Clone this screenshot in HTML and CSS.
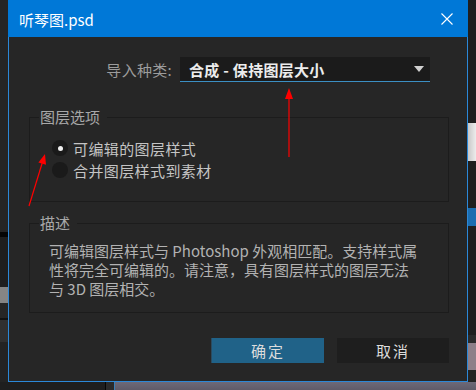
FILE: index.html
```html
<!DOCTYPE html>
<html lang="zh-CN">
<head>
    <meta charset="UTF-8">
    <meta name="viewport" content="width=device-width, initial-scale=1.0">
    <title>听琴图.psd</title>
    <link rel="stylesheet" href="styles.css">
</head>
<body>
    <div class="desktop">
        <div class="main-row">
            <!-- Bits of the app window behind the dialog -->
            <div class="side-strip left-strip">
                <span class="seg" style="height:232px;background:#252525"></span>
                <span class="seg" style="height:5px;background:#050505"></span>
                <span class="seg" style="height:50px;background:#1e1e1e"></span>
                <span class="seg" style="height:16px;background:#858585"></span>
                <span class="seg" style="height:15px;background:#262626"></span>
                <span class="seg" style="height:2px;background:#111"></span>
                <span class="seg" style="height:22px;background:#303030"></span>
            </div>

            <div class="dialog">
                <div class="titlebar">
                    <span class="title">听琴图.psd</span>
                    <svg class="close" width="12" height="12" viewBox="0 0 12 12">
                        <path d="M0.5 0.5 L11.5 11.5 M11.5 0.5 L0.5 11.5" stroke="#fff" stroke-width="1.1" fill="none"/>
                    </svg>
                </div>

                <div class="import-row">
                    <span class="import-label">导入种类:</span>
                    <div class="dropdown">
                        <span>合成 - 保持图层大小</span>
                        <span class="caret"></span>
                    </div>
                </div>

                <fieldset class="group layer-group">
                    <legend>图层选项</legend>
                    <div class="radio-list">
                        <div class="radio-row">
                            <span class="radio checked"></span>
                            <span class="radio-label">可编辑的图层样式</span>
                        </div>
                        <div class="radio-row">
                            <span class="radio"></span>
                            <span class="radio-label">合并图层样式到素材</span>
                        </div>
                    </div>
                </fieldset>

                <fieldset class="group desc-group">
                    <legend>描述</legend>
                    <p class="desc">可编辑图层样式与 Photoshop 外观相匹配。支持样式属<br>性将完全可编辑的。请注意，具有图层样式的图层无法<br>与 3D 图层相交。</p>
                </fieldset>

                <div class="buttons">
                    <button class="btn btn-ok">确定</button>
                    <button class="btn btn-cancel">取消</button>
                </div>
            </div>

            <div class="side-strip right-strip">
                <span class="seg" style="height:123px;background:#1f1f1f"></span>
                <span class="seg" style="height:38px;background:linear-gradient(90deg,#c8c8c8,#ececec)"></span>
                <span class="seg" style="height:47px;background:#1f1f1f"></span>
                <span class="seg" style="height:18px;background:#1b6db0"></span>
                <span class="seg" style="height:109px;background:#1f1f1f"></span>
                <span class="seg" style="height:8px;background:#2b2b2b"></span>
                <span class="seg" style="height:27px;background:#8d7f88"></span>
            </div>
        </div>
        <div class="bottom-strip">
            <span class="bottom-dark"></span>
            <span class="bottom-line"></span>
            <span class="bottom-gap"></span>
            <span class="bottom-window"></span>
        </div>
    </div>

    <!-- Red annotation arrows drawn over the dialog -->
    <svg class="annotations" width="476" height="390" viewBox="0 0 476 390">
        <line x1="289" y1="157" x2="289" y2="97" stroke="#ff0000" stroke-width="1.2"/>
        <polygon points="289,88 285,99 293,99" fill="#ff0000"/>
        <line x1="29" y1="206" x2="42.2" y2="163" stroke="#ff0000" stroke-width="1.2"/>
        <polygon points="45,154 46,164.7 38.4,162.5" fill="#ff0000"/>
    </svg>
</body>
</html>
```

FILE: styles.css
```css
* {
    margin: 0;
    padding: 0;
    box-sizing: border-box;
}

body {
    width: 476px;
    height: 390px;
    overflow: hidden;
    position: relative;
    background: #1c1c1c;
    font-family: "Noto Sans CJK SC", "Noto Sans", sans-serif;
}

.desktop {
    display: flex;
    flex-direction: column;
    height: 390px;
}

.main-row {
    display: flex;
    height: 382px;
}

.side-strip {
    width: 8px;
    display: flex;
    flex-direction: column;
    background: #232323;
}

.seg {
    display: block;
    flex-shrink: 0;
}

/* Dialog window */
.dialog {
    width: 460px;
    height: 382px;
    background: #262626;
    border: 1px solid #2b88d8;
    border-top: none;
    display: flex;
    flex-direction: column;
}

.titlebar {
    height: 37px;
    margin: 0 -1px;
    padding: 1px 15px 0 11px;
    background: #0078d7;
    color: #fff;
    font-size: 15px;
    display: flex;
    align-items: center;
    justify-content: space-between;
}

.close {
    display: block;
}

.import-row {
    display: flex;
    justify-content: flex-end;
    align-items: center;
    gap: 8px;
    margin-top: 20px;
    padding-right: 37px;
}

.import-label {
    color: #9c9c9c;
    font-size: 15px;
    letter-spacing: 0.3px;
}

.dropdown {
    width: 250px;
    height: 25px;
    background: #1b1b1b;
    border-bottom: 1px solid #3b8fc3;
    padding: 0 6px 0 9px;
    color: #ececec;
    font-size: 15px;
    font-weight: bold;
    letter-spacing: 0.3px;
    display: flex;
    align-items: center;
    justify-content: space-between;
}

.caret {
    width: 0;
    height: 0;
    border-left: 5px solid transparent;
    border-right: 5px solid transparent;
    border-top: 6px solid #d0d0d0;
}

/* Group boxes */
.group {
    border: 1px solid #1c1c1c;
    margin: 0 18px 0 20px;
    padding: 0 0 0 9px;
}

.group legend {
    padding: 0 7px 0 1px;
    font-size: 15px;
    line-height: 20px;
    color: #a8a8a8;
}

.layer-group {
    margin-top: 25px;
}

.radio-list {
    padding: 10px 0 20px 13px;
}

.radio-row {
    height: 22px;
    display: flex;
    align-items: center;
    gap: 5px;
}

.radio {
    width: 16px;
    height: 16px;
    border-radius: 50%;
    background: #1a1a1a;
    display: flex;
    align-items: center;
    justify-content: center;
}

.radio.checked::after {
    content: "";
    width: 5px;
    height: 5px;
    border-radius: 50%;
    background: #f0f0f0;
}

.radio-label {
    color: #c4c4c4;
    font-size: 15px;
    letter-spacing: 0.4px;
}

.desc-group {
    margin-top: 11px;
}

.desc {
    padding: 8px 0 14px 10px;
    color: #b2b2b2;
    font-size: 15px;
    line-height: 19px;
}

/* Buttons */
.buttons {
    display: flex;
    justify-content: flex-end;
    gap: 13px;
    margin-top: 25px;
    padding-right: 18px;
}

.btn {
    height: 25px;
    border: none;
    font-family: inherit;
    font-size: 15px;
    letter-spacing: 2px;
    color: #dcdcdc;
}

.btn-ok {
    width: 113px;
    background: #206288;
    border-left: 1px solid #2a4b60;
}

.btn-cancel {
    width: 112px;
    background: #1e1e1e;
}

.bottom-strip {
    display: flex;
    height: 8px;
}

.bottom-dark {
    width: 105px;
    background: #1e1e1e;
}

.bottom-line {
    width: 1px;
    background: #050505;
}

.bottom-gap {
    width: 9px;
    background: #2a2a2a;
    border-right: 1px solid #3a7fb8;
}

.bottom-window {
    flex: 1;
    background: linear-gradient(180deg, #6d6978, #5f5b69);
}

.annotations {
    position: absolute;
    left: 0;
    top: 0;
    pointer-events: none;
}
```
